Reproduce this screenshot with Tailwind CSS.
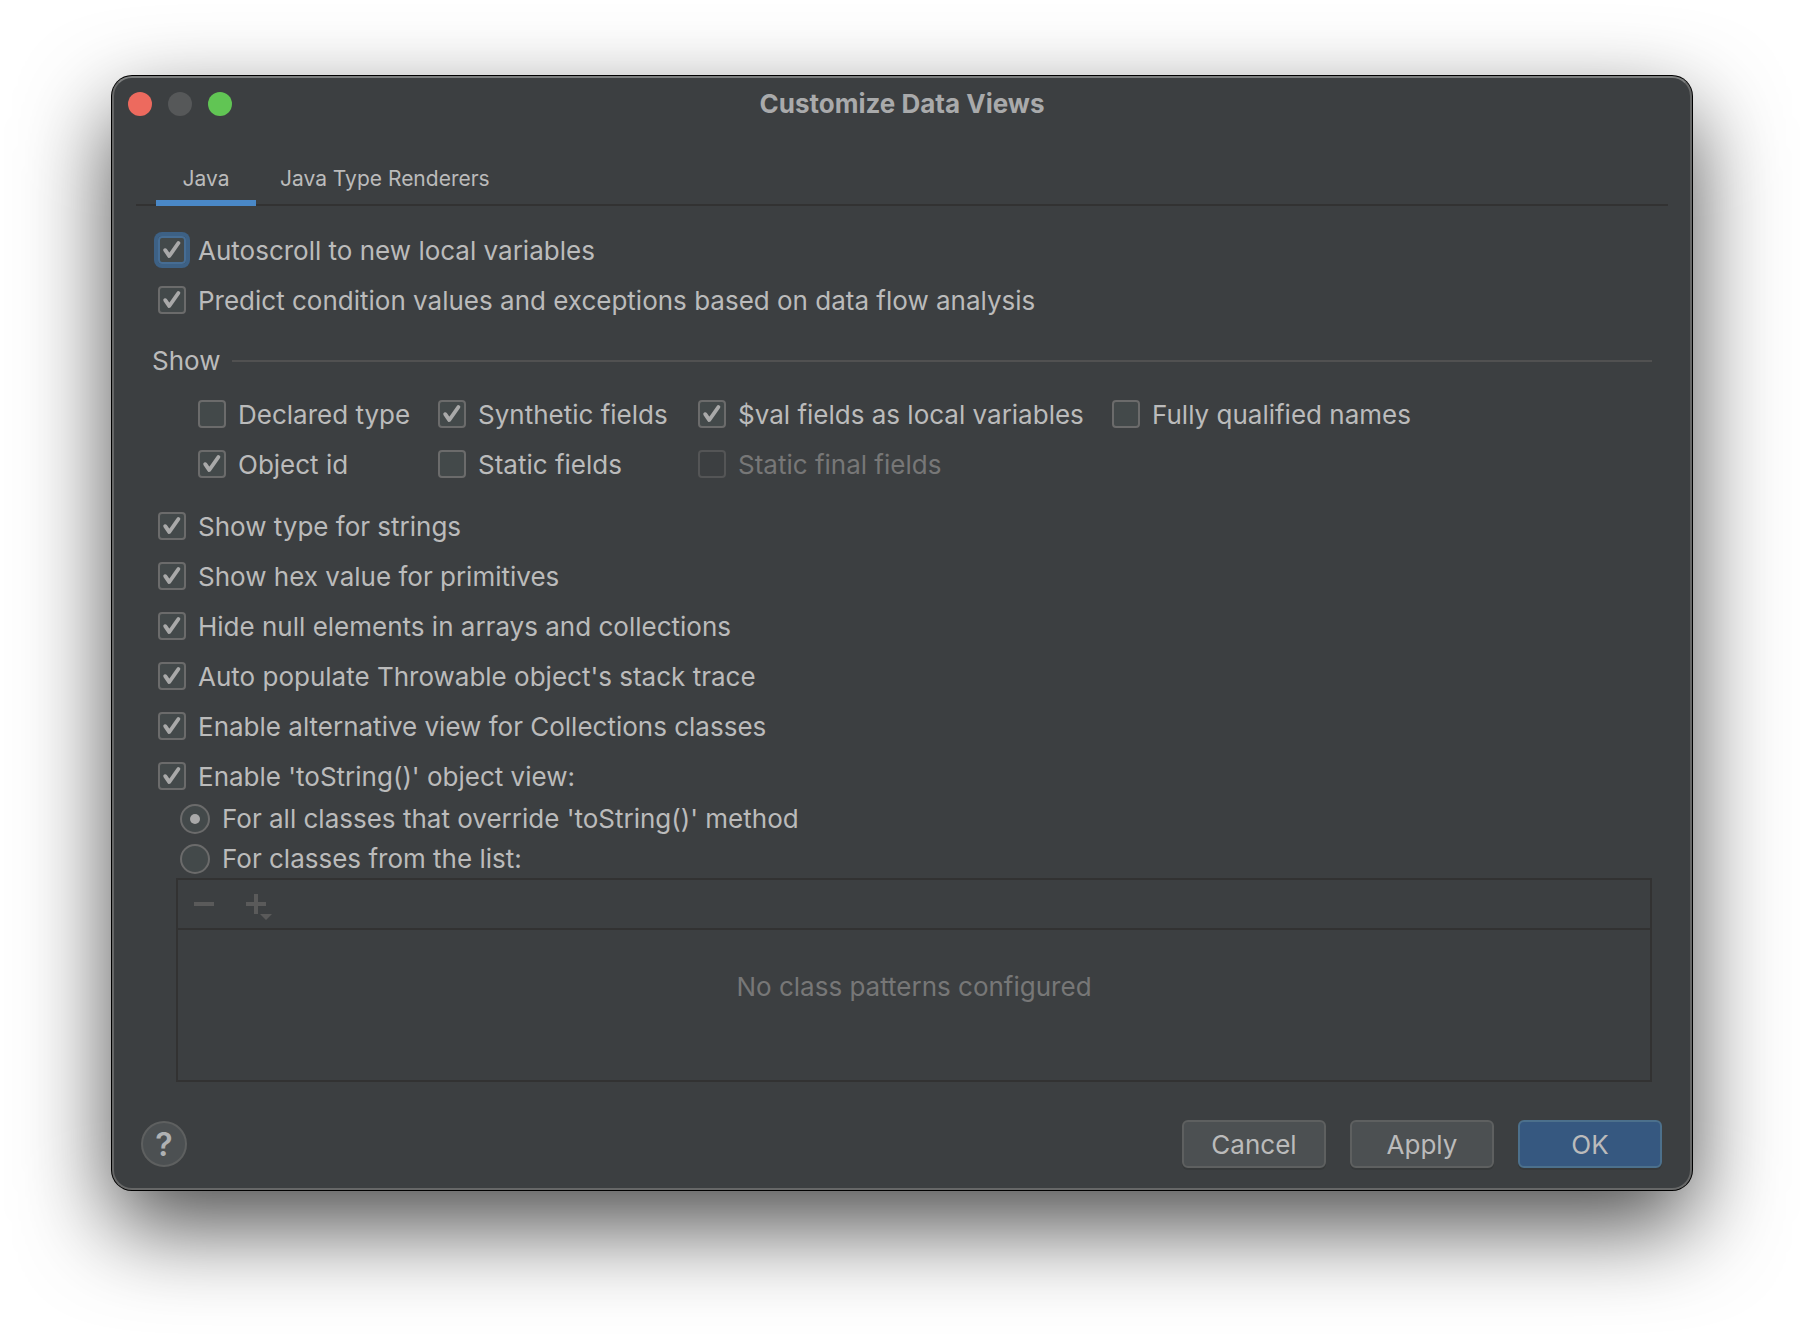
<!DOCTYPE html>
<html lang="en">
<head>
<meta charset="utf-8">
<meta name="viewport" content="width=device-width, initial-scale=1">
<title>Customize Data Views</title>
<script src="https://cdn.jsdelivr.net/npm/@tailwindcss/browser@4"></script>
</head>
<body class="min-h-screen bg-white px-28 pt-19 pb-37 font-['Inter','Liberation_Sans',sans-serif] text-[26px] leading-[30px] text-[#bbbbbb]">

<svg class="hidden" aria-hidden="true">
  <symbol id="check" viewBox="0 0 28 28">
    <path d="M7.2 14.2 L11.3 20 L20.4 7" fill="none" stroke="#a9a9a9" stroke-width="3.9" stroke-linecap="round" stroke-linejoin="round"/>
  </symbol>
</svg>

<main role="dialog" aria-labelledby="title" class="w-full rounded-[20px] border-2 border-[#666767] border-t-[#7c7e7e] bg-[#3c3f41] shadow-[0_0_0_1px_#000,0_36px_90px_rgba(0,0,0,0.7)]">

  <!-- Title bar -->
  <header class="grid h-13 grid-cols-[1fr_auto_1fr] items-center px-[14px]">
    <div class="flex gap-4">
      <button type="button" aria-label="Close" class="size-6 rounded-full bg-[#ed6a5e]"></button>
      <button type="button" aria-label="Minimize" disabled class="size-6 rounded-full bg-[#565859]"></button>
      <button type="button" aria-label="Zoom" class="size-6 rounded-full bg-[#61c554]"></button>
    </div>
    <h1 id="title" class="font-bold text-[#a9aaab]">Customize Data Views</h1>
  </header>

  <!-- Tabs -->
  <div role="tablist" class="mx-[22px] mt-6 flex border-b-2 border-[#323232] pl-5 text-[21px]">
    <button type="button" role="tab" aria-selected="true" class="-mb-0.5 h-13 min-w-25 border-b-6 border-[#4a88c7] px-6 pt-1">Java</button>
    <button type="button" role="tab" aria-selected="false" class="-mb-0.5 h-13 border-b-6 border-transparent px-6 pt-1">Java Type Renderers</button>
  </div>

  <div class="px-[38px] pt-[30px]">
    <div class="flex flex-col items-start gap-[22px] pl-[6px]">
      <label class="flex h-7 items-start gap-3"><span class="grid size-7 rounded-[4px] ring-4 ring-[#3d6185]"><input type="checkbox" checked class="peer col-start-1 row-start-1 size-7 appearance-none rounded-[4px] border-2 border-[#466d94] bg-[#43494a]"><svg class="invisible pointer-events-none col-start-1 row-start-1 size-7 peer-checked:visible"><use href="#check"/></svg></span>Autoscroll to new local variables</label>
      <label class="flex h-7 items-start gap-3"><span class="grid size-7"><input type="checkbox" checked class="peer col-start-1 row-start-1 size-7 appearance-none rounded-[4px] border-2 border-[#6b6b6b] bg-[#43494a]"><svg class="invisible pointer-events-none col-start-1 row-start-1 size-7 peer-checked:visible"><use href="#check"/></svg></span>Predict condition values and exceptions based on data flow analysis</label>
    </div>

    <!-- Show group -->
    <section aria-labelledby="show">
      <div class="mt-8 flex items-center gap-3">
        <h2 id="show">Show</h2>
        <div class="h-0.5 flex-1 bg-[#515151]"></div>
      </div>
      <div class="mt-6 grid grid-cols-[240px_260px_414px_1fr] gap-y-[22px] pl-[46px]">
        <label class="flex h-7 items-start gap-3"><span class="grid size-7"><input type="checkbox" class="peer col-start-1 row-start-1 size-7 appearance-none rounded-[4px] border-2 border-[#6b6b6b] bg-[#43494a]"><svg class="invisible pointer-events-none col-start-1 row-start-1 size-7 peer-checked:visible"><use href="#check"/></svg></span>Declared type</label>
        <label class="flex h-7 items-start gap-3"><span class="grid size-7"><input type="checkbox" checked class="peer col-start-1 row-start-1 size-7 appearance-none rounded-[4px] border-2 border-[#6b6b6b] bg-[#43494a]"><svg class="invisible pointer-events-none col-start-1 row-start-1 size-7 peer-checked:visible"><use href="#check"/></svg></span>Synthetic fields</label>
        <label class="flex h-7 items-start gap-3"><span class="grid size-7"><input type="checkbox" checked class="peer col-start-1 row-start-1 size-7 appearance-none rounded-[4px] border-2 border-[#6b6b6b] bg-[#43494a]"><svg class="invisible pointer-events-none col-start-1 row-start-1 size-7 peer-checked:visible"><use href="#check"/></svg></span>$val fields as local variables</label>
        <label class="flex h-7 items-start gap-3"><span class="grid size-7"><input type="checkbox" class="peer col-start-1 row-start-1 size-7 appearance-none rounded-[4px] border-2 border-[#6b6b6b] bg-[#43494a]"><svg class="invisible pointer-events-none col-start-1 row-start-1 size-7 peer-checked:visible"><use href="#check"/></svg></span>Fully qualified names</label>
        <label class="flex h-7 items-start gap-3"><span class="grid size-7"><input type="checkbox" checked class="peer col-start-1 row-start-1 size-7 appearance-none rounded-[4px] border-2 border-[#6b6b6b] bg-[#43494a]"><svg class="invisible pointer-events-none col-start-1 row-start-1 size-7 peer-checked:visible"><use href="#check"/></svg></span>Object id</label>
        <label class="flex h-7 items-start gap-3"><span class="grid size-7"><input type="checkbox" class="peer col-start-1 row-start-1 size-7 appearance-none rounded-[4px] border-2 border-[#6b6b6b] bg-[#43494a]"><svg class="invisible pointer-events-none col-start-1 row-start-1 size-7 peer-checked:visible"><use href="#check"/></svg></span>Static fields</label>
        <label class="flex h-7 items-start gap-3 text-[#777777]"><span class="grid size-7"><input type="checkbox" disabled class="peer col-start-1 row-start-1 size-7 appearance-none rounded-[4px] border-2 border-[#545556] bg-[#3c3f41]"><svg class="invisible pointer-events-none col-start-1 row-start-1 size-7 peer-checked:visible"><use href="#check"/></svg></span>Static final fields</label>
      </div>
    </section>

    <div class="mt-[34px] flex flex-col items-start gap-[22px] pl-[6px]">
      <label class="flex h-7 items-start gap-3"><span class="grid size-7"><input type="checkbox" checked class="peer col-start-1 row-start-1 size-7 appearance-none rounded-[4px] border-2 border-[#6b6b6b] bg-[#43494a]"><svg class="invisible pointer-events-none col-start-1 row-start-1 size-7 peer-checked:visible"><use href="#check"/></svg></span>Show type for strings</label>
      <label class="flex h-7 items-start gap-3"><span class="grid size-7"><input type="checkbox" checked class="peer col-start-1 row-start-1 size-7 appearance-none rounded-[4px] border-2 border-[#6b6b6b] bg-[#43494a]"><svg class="invisible pointer-events-none col-start-1 row-start-1 size-7 peer-checked:visible"><use href="#check"/></svg></span>Show hex value for primitives</label>
      <label class="flex h-7 items-start gap-3"><span class="grid size-7"><input type="checkbox" checked class="peer col-start-1 row-start-1 size-7 appearance-none rounded-[4px] border-2 border-[#6b6b6b] bg-[#43494a]"><svg class="invisible pointer-events-none col-start-1 row-start-1 size-7 peer-checked:visible"><use href="#check"/></svg></span>Hide null elements in arrays and collections</label>
      <label class="flex h-7 items-start gap-3"><span class="grid size-7"><input type="checkbox" checked class="peer col-start-1 row-start-1 size-7 appearance-none rounded-[4px] border-2 border-[#6b6b6b] bg-[#43494a]"><svg class="invisible pointer-events-none col-start-1 row-start-1 size-7 peer-checked:visible"><use href="#check"/></svg></span>Auto populate Throwable object's stack trace</label>
      <label class="flex h-7 items-start gap-3"><span class="grid size-7"><input type="checkbox" checked class="peer col-start-1 row-start-1 size-7 appearance-none rounded-[4px] border-2 border-[#6b6b6b] bg-[#43494a]"><svg class="invisible pointer-events-none col-start-1 row-start-1 size-7 peer-checked:visible"><use href="#check"/></svg></span>Enable alternative view for Collections classes</label>
      <label class="flex h-7 items-start gap-3"><span class="grid size-7"><input type="checkbox" checked class="peer col-start-1 row-start-1 size-7 appearance-none rounded-[4px] border-2 border-[#6b6b6b] bg-[#43494a]"><svg class="invisible pointer-events-none col-start-1 row-start-1 size-7 peer-checked:visible"><use href="#check"/></svg></span>Enable 'toString()' object view:</label>
    </div>

    <div role="radiogroup" aria-label="Object view" class="mt-[14px] flex flex-col items-start gap-[10px] pl-7">
      <label class="flex items-center gap-3"><input type="radio" name="view" checked class="grid size-[30px] appearance-none place-items-center rounded-full border-2 border-[#6b6b6b] bg-[#43494a] before:size-[10px] before:rounded-full checked:before:bg-[#a9a9a9]">For all classes that override 'toString()' method</label>
      <label class="flex items-center gap-3"><input type="radio" name="view" class="grid size-[30px] appearance-none place-items-center rounded-full border-2 border-[#6b6b6b] bg-[#43494a] before:size-[10px] before:rounded-full checked:before:bg-[#a9a9a9]">For classes from the list:</label>
    </div>

    <!-- Class patterns -->
    <section aria-label="Class patterns" class="mt-1 ml-6 border-2 border-[#323232]">
      <div class="flex gap-5 border-b-2 border-[#323232] px-2.5 py-2">
        <button type="button" disabled aria-label="Remove" class="size-8">
          <svg viewBox="0 0 32 32" class="size-8"><path d="M6 14h20v4H6z" fill="#5a5a5a"/></svg>
        </button>
        <button type="button" disabled aria-label="Add" class="size-8">
          <svg viewBox="0 0 32 32" class="size-8"><path d="M14 6h4v8h8v4h-8v8h-4v-8H6v-4h8zM20 26h12l-6 6z" fill="#5a5a5a"/></svg>
        </button>
      </div>
      <p class="h-[150px] pt-[42px] text-center text-[#777777]">No class patterns configured</p>
    </section>
  </div>

  <!-- Buttons -->
  <footer class="mt-[38px] flex items-center gap-6 pr-7 pb-5 pl-[27px]">
    <button type="button" aria-label="Help" class="mr-auto size-[46px] rounded-full border-2 border-[#5e6060] bg-[#4c5052] pt-0.5 text-[32px] font-semibold text-[#afb1b3]">?</button>
    <button type="button" class="h-12 w-36 rounded-[6px] border-2 border-[#5e6060] bg-[#4c5052] pt-0.5 shadow-[0_2px_0_#36393a]">Cancel</button>
    <button type="button" class="h-12 w-36 rounded-[6px] border-2 border-[#5e6060] bg-[#4c5052] pt-0.5 shadow-[0_2px_0_#36393a]">Apply</button>
    <button type="button" class="h-12 w-36 rounded-[6px] border-2 border-[#4c708c] bg-[#365880] pt-0.5 shadow-[0_2px_0_#36393a]">OK</button>
  </footer>
</main>
</body>
</html>
